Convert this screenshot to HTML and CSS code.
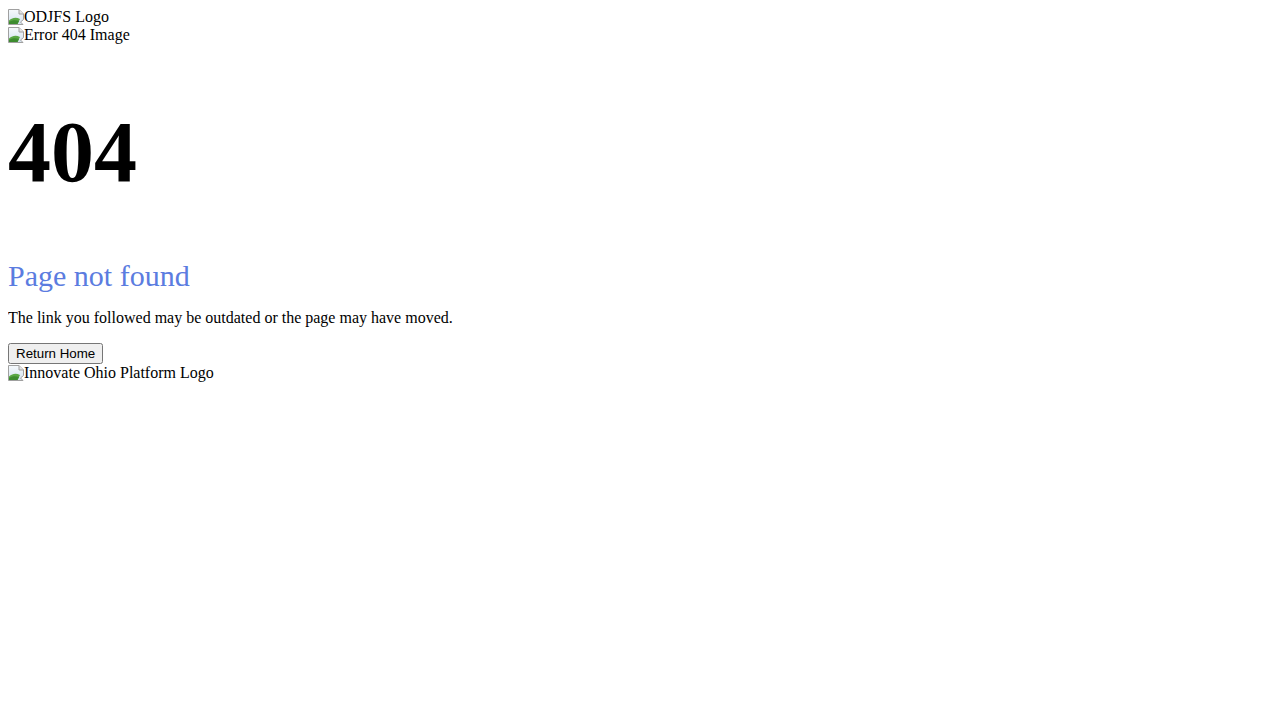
FILE: index.html
```html
<!DOCTYPE html>
<html lang="en">
<head>
<meta charset="utf-8">
<title>Page not found</title>
<link rel="stylesheet" href="styles.css">
</head>
<body>
<svg class="defs" width="0" height="0" aria-hidden="true"><defs><linearGradient id="sky" x1="0" y1="0" x2="0" y2="1"><stop offset="0" stop-color="#f6f9fc"/><stop offset="1" stop-color="#d3e2ef"/></linearGradient></defs></svg>
<div class="alt-img"><svg class="broken" width="16" height="16" viewBox="0 0 16 16" aria-hidden="true"><path d="M0.5 0.5H11L15.5 5V10.5L12.5 13L15 15.5H0.5Z" fill="url(#sky)" stroke="#a0a0a0"/><path d="M11 0.5V5H15.5" fill="#e4e4e4" stroke="#a0a0a0"/><path d="M1 15V11.5C4.5 8.5 8 8 12 10L9.5 15Z" fill="#5aa744"/><path d="M1 15V13C4 11 7.5 10.8 11 12L9.5 15Z" fill="#3d8c2f"/></svg><span>ODJFS Logo</span></div>
<div class="alt-img"><svg class="broken" width="16" height="16" viewBox="0 0 16 16" aria-hidden="true"><path d="M0.5 0.5H11L15.5 5V10.5L12.5 13L15 15.5H0.5Z" fill="url(#sky)" stroke="#a0a0a0"/><path d="M11 0.5V5H15.5" fill="#e4e4e4" stroke="#a0a0a0"/><path d="M1 15V11.5C4.5 8.5 8 8 12 10L9.5 15Z" fill="#5aa744"/><path d="M1 15V13C4 11 7.5 10.8 11 12L9.5 15Z" fill="#3d8c2f"/></svg><span>Error 404 Image</span></div>
<h1 class="code">404</h1>
<h2 class="title">Page not found</h2>
<p class="message">The link you followed may be outdated or the page may have moved.</p>
<div class="actions"><button class="home-btn" type="button">Return Home</button></div>
<div class="alt-img"><svg class="broken" width="16" height="16" viewBox="0 0 16 16" aria-hidden="true"><path d="M0.5 0.5H11L15.5 5V10.5L12.5 13L15 15.5H0.5Z" fill="url(#sky)" stroke="#a0a0a0"/><path d="M11 0.5V5H15.5" fill="#e4e4e4" stroke="#a0a0a0"/><path d="M1 15V11.5C4.5 8.5 8 8 12 10L9.5 15Z" fill="#5aa744"/><path d="M1 15V13C4 11 7.5 10.8 11 12L9.5 15Z" fill="#3d8c2f"/></svg><span>Innovate Ohio Platform Logo</span></div>
</body>
</html>
```

FILE: styles.css
```css
html, body {
  background: #ffffff;
}
body {
  margin: 8px;
  font-family: "Liberation Serif", "Times New Roman", serif;
  font-size: 16px;
  color: #000000;
}
.defs {
  position: absolute;
  width: 0;
  height: 0;
}
.alt-img {
  height: 18px;
  line-height: 18px;
  white-space: nowrap;
}
.broken {
  display: inline-block;
  vertical-align: -3px;
}
.code {
  font-size: 86px;
  font-weight: bold;
  margin: 58px 0 0;
}
.title {
  font-size: 30px;
  font-weight: normal;
  color: rgb(91, 124, 224);
  margin: 57px 0 0;
}
.message {
  margin: 16px 0;
}
.actions {
  height: 21px;
  line-height: 0;
}
.home-btn {
  font-family: "Liberation Sans", Arial, sans-serif;
  font-size: 13.333px;
  line-height: normal;
  margin: 0;
}
```
